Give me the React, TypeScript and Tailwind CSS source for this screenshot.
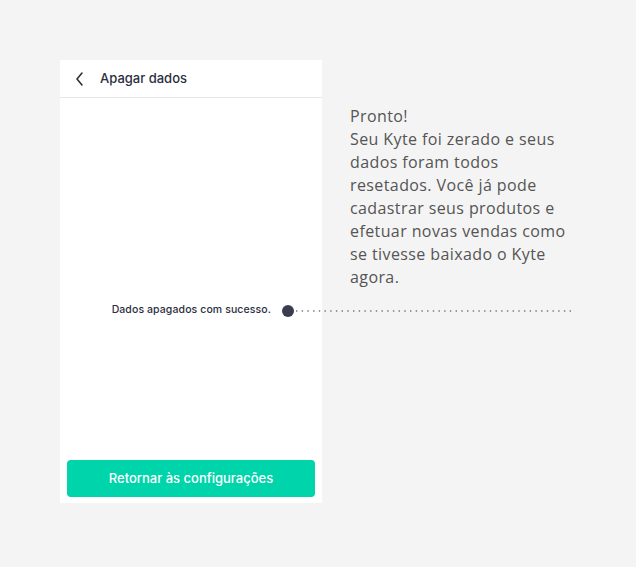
import React from 'react';

const lines = [
  'Pronto!',
  'Seu Kyte foi zerado e seus',
  'dados foram todos',
  'resetados. Você já pode',
  'cadastrar seus produtos e',
  'efetuar novas vendas como',
  'se tivesse baixado o Kyte',
  'agora.',
];

const App: React.FC = () => {
  return (
    <div className="w-[636px] h-[567px] bg-[#f4f4f4] flex pl-[60px] pt-[60px]" style={{ fontFamily: 'Inter, "Open Sans", sans-serif' }}>
      {/* Phone panel */}
      <div className="w-[262px] h-[443px] bg-white flex flex-col shrink-0">
        <div className="h-[38px] flex items-center gap-[14px] pl-[14px] border-b border-[#e3e7ee]">
          <svg width="12" height="16" viewBox="0 0 12 16" fill="none">
            <path d="M8 2 L3 8 L8 14" stroke="#2b2f3e" strokeWidth="1.6" strokeLinecap="round" strokeLinejoin="round" />
          </svg>
          <span className="text-[13px] font-medium text-[#2b2f3e]">Apagar dados</span>
        </div>
        <div className="flex-1 flex items-center justify-end pr-[51px] pt-[62px]">
          <span className="text-[10.5px] font-medium text-[#2b2f3e] tracking-[0.1px]">Dados apagados com sucesso.</span>
        </div>
        <div className="px-[7px] pb-[6px]">
          <button className="w-full h-[37px] rounded-[4px] bg-[#00d4ab] text-white text-[13px] font-medium">
            Retornar às configurações
          </button>
        </div>
      </div>

      {/* Annotation */}
      <div className="relative flex-1">
        <div className="absolute left-[-40px] top-[245px] flex items-center">
          <div className="w-[12px] h-[12px] rounded-full bg-[#3b3d4e]" />
          <svg width="276" height="2" className="ml-[2px]">
            <line x1="0" y1="1" x2="276" y2="1" stroke="#74768a" strokeWidth="1.4" strokeDasharray="1.4 4.3" />
          </svg>
        </div>
        <div
          className="ml-[28px] mt-[45px] flex flex-col text-[16px] leading-[23px] tracking-[0.4px] text-[#555555]"
          style={{ fontFamily: '"Open Sans", sans-serif' }}
        >
          {lines.map((l, i) => (
            <span key={i} className="whitespace-nowrap">{l}</span>
          ))}
        </div>
      </div>
    </div>
  );
};

export default App;
